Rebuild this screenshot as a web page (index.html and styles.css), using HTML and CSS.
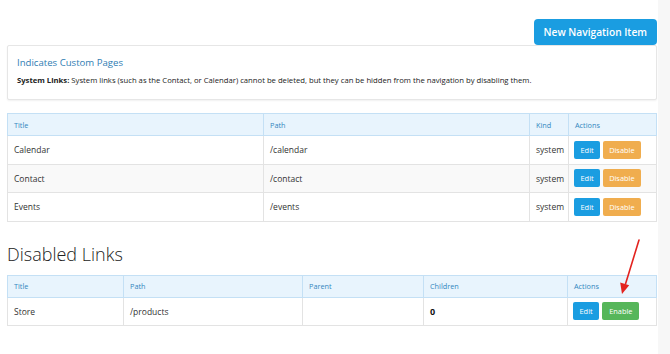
FILE: index.html
```html
<!DOCTYPE html>
<html lang="en">
<head>
    <meta charset="UTF-8">
    <meta name="viewport" content="width=device-width, initial-scale=1.0">
    <title>Navigation</title>
    <link rel="stylesheet" href="styles.css">
</head>
<body>
    <div class="page">
        <main class="content">
            <div class="toolbar">
                <button class="btn btn-blue btn-lg">New Navigation Item</button>
            </div>

            <div class="notice">
                <h4 class="notice-title">Indicates Custom Pages</h4>
                <p class="notice-text"><strong>System Links:</strong> System links (such as the Contact, or Calendar) cannot be deleted, but they can be hidden from the navigation by disabling them.</p>
            </div>

            <table class="nav-table">
                <colgroup>
                    <col style="width: 256px">
                    <col style="width: 266px">
                    <col style="width: 39px">
                    <col>
                </colgroup>
                <thead>
                    <tr><th>Title</th><th>Path</th><th>Kind</th><th>Actions</th></tr>
                </thead>
                <tbody>
                    <tr>
                        <td>Calendar</td><td>/calendar</td><td>system</td>
                        <td class="actions-cell"><div class="actions"><button class="btn btn-blue">Edit</button><button class="btn btn-orange">Disable</button></div></td>
                    </tr>
                    <tr>
                        <td>Contact</td><td>/contact</td><td>system</td>
                        <td class="actions-cell"><div class="actions"><button class="btn btn-blue">Edit</button><button class="btn btn-orange">Disable</button></div></td>
                    </tr>
                    <tr>
                        <td>Events</td><td>/events</td><td>system</td>
                        <td class="actions-cell"><div class="actions"><button class="btn btn-blue">Edit</button><button class="btn btn-orange">Disable</button></div></td>
                    </tr>
                </tbody>
            </table>

            <h2 class="section-title">Disabled Links</h2>

            <table class="nav-table nav-table-tight">
                <colgroup>
                    <col style="width: 116px">
                    <col style="width: 179px">
                    <col style="width: 121px">
                    <col style="width: 144px">
                    <col>
                </colgroup>
                <thead>
                    <tr><th>Title</th><th>Path</th><th>Parent</th><th>Children</th><th>Actions</th></tr>
                </thead>
                <tbody>
                    <tr>
                        <td>Store</td><td>/products</td><td></td><td><strong>0</strong></td>
                        <td class="actions-cell"><div class="actions"><button class="btn btn-blue">Edit</button><button class="btn btn-green">Enable</button></div></td>
                    </tr>
                </tbody>
            </table>
        </main>
        <aside class="side-strip"></aside>

        <!-- annotation arrow -->
        <svg class="arrow" width="40" height="70" viewBox="0 0 40 70">
            <line x1="30" y1="2" x2="16.5" y2="46" stroke="#e3231f" stroke-width="1.6" stroke-linecap="round"/>
            <polygon points="13,56 11.2,44.5 20.2,47.3" fill="#e3231f"/>
        </svg>
    </div>
</body>
</html>
```

FILE: styles.css
```css
* {
    box-sizing: border-box;
}

body {
    margin: 0;
    font-family: 'Open Sans', 'Liberation Sans', sans-serif;
    color: #333;
    background-color: #fff;
}

.page {
    position: relative;
    display: flex;
    min-height: 354px;
}

.content {
    width: 658px;
    padding: 19px 1px 20px 7px;
}

.side-strip {
    flex: 1;
    background-color: #f7f7f7;
}

.toolbar {
    display: flex;
    justify-content: flex-end;
}

.btn {
    border: none;
    border-radius: 2px;
    color: #fff;
    font-family: 'Open Sans', 'Liberation Sans', sans-serif;
    font-size: 7.4px;
    height: 18px;
    padding: 0 6.5px;
    cursor: pointer;
}

.btn-lg {
    height: 26px;
    padding: 0 10px;
    font-size: 10.2px;
    font-weight: 600;
    border-radius: 4px;
}

.btn-blue {
    background-color: #1a9de1;
}

.btn-orange {
    background-color: #f0ad4e;
    padding: 0 6px;
}

.btn-green {
    background-color: #56b65a;
    padding: 0 7px;
}

.notice {
    background-color: #fff;
    border: 1px solid #e6e6e6;
    border-radius: 2px;
    box-shadow: 0 1px 2px rgba(0, 0, 0, 0.06);
    height: 55px;
    padding: 10px 9px 0;
}

.notice-title {
    margin: 0;
    font-size: 9.6px;
    font-weight: 400;
    color: #2f7db3;
    line-height: 14px;
}

.notice-text {
    margin: 5px 0 0;
    font-size: 7.7px;
    line-height: 11px;
    color: #222;
}

.nav-table {
    width: 650px;
    table-layout: fixed;
    border-collapse: collapse;
    margin-top: 13px;
    font-size: 8.5px;
}

.nav-table-tight {
    margin-top: 11px;
}

.nav-table th {
    background-color: #e8f4fd;
    border: 1px solid #c4e0f5;
    color: #3387c0;
    font-weight: 400;
    font-size: 7.3px;
    text-align: left;
    height: 22px;
    padding: 0 6px;
}

.nav-table td {
    border: 1px solid #e3e3e3;
    height: 28.5px;
    padding: 0 6px;
    color: #333;
}

.nav-table td.actions-cell {
    padding: 0 5px;
}

.nav-table tbody tr:nth-child(2) td {
    background-color: #f9f9f9;
}

.nav-table td strong {
    font-size: 9px;
    color: #111;
}

.actions {
    display: flex;
    gap: 3px;
}

.section-title {
    margin: 22px 0 0;
    font-size: 18px;
    font-weight: 300;
    color: #222;
    line-height: 20px;
}

.arrow {
    position: absolute;
    left: 609px;
    top: 238px;
}
```
